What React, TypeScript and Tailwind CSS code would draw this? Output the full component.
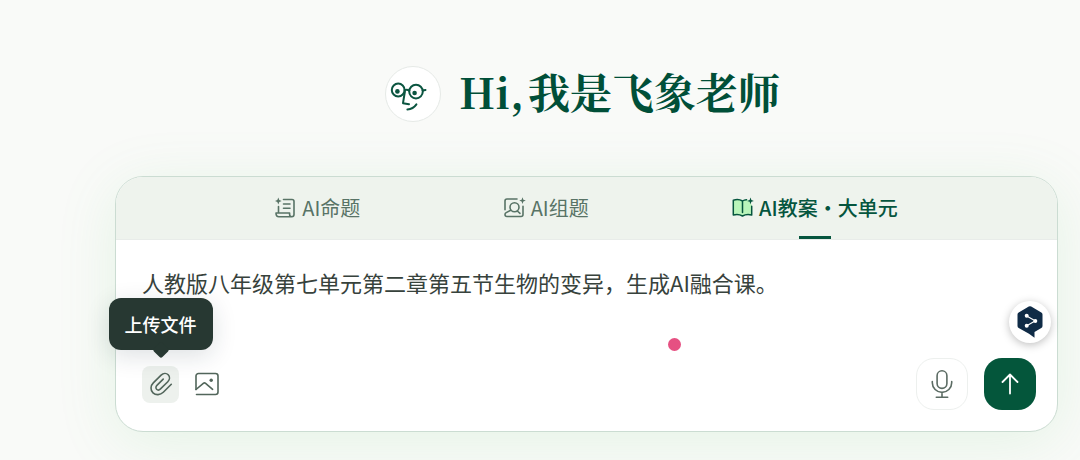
import { useState } from 'react'
import type { ReactNode } from 'react'
import clsx from 'clsx'

type TabId = 'question' | 'paper' | 'lesson'

interface Tab {
  id: TabId
  label: string
  icon: ReactNode
}

// ── 图标 ──────────────────────────────────────────────────────────
function FaceLogo() {
  return (
    <svg viewBox="0 0 56 56" className="size-14 shrink-0" fill="none" stroke="#0b5540" strokeWidth="2" strokeLinecap="round" strokeLinejoin="round" aria-hidden="true">
      <circle cx="13.2" cy="24" r="6.4" />
      <circle cx="31" cy="25.6" r="6.8" />
      <path d="M19.6 24.2c1.6-.9 3-.8 4.7.4M37.7 24.6l2.800-.6" />
      <path d="M19.9 25.5 18 37.2l6 1" />
      <path d="M22.4 43.4c3.8-.2 6.9-2 9-5" />
      <circle cx="12.4" cy="25.4" r="2.3" fill="#0b5540" stroke="none" />
      <circle cx="29.6" cy="27" r="2.3" fill="#0b5540" stroke="none" />
    </svg>
  )
}

function QuestionIcon() {
  return (
    <svg viewBox="0 0 22 22" className="size-[22px]" fill="none" stroke="currentColor" strokeWidth="1.6" strokeLinecap="round" strokeLinejoin="round" aria-hidden="true">
      <path d="M8.5 2.5H17a2 2 0 0 1 2 2V17.5a2.200 2.200 0 0 1-4.400 0V16H1c0 2.300 1 3.700 2.900 3.700H17M3.500 9.500V16" />
      <path d="M8.5 7H15M8.5 11.2H15" />
      <path d="M3.3.6 4.3 3l2.400 1-2.400 1-1 2.400-1-2.400L0 4l2.300-1z" fill="currentColor" stroke="none" />
    </svg>
  )
}

function PaperIcon() {
  return (
    <svg viewBox="0 0 22 22" className="size-[22px]" fill="none" stroke="currentColor" strokeWidth="1.6" strokeLinecap="round" strokeLinejoin="round" aria-hidden="true">
      <path d="M13 2H3a2 2 0 0 0-2 2v8.7M19 9.2v8.3a2 2 0 0 1-2 2H3a2 2 0 0 1-2-2c0-1 .3-1.400 1.200-1.900l4.500-2.400" />
      <circle cx="10.5" cy="10.2" r="4.5" />
      <path d="M13.3 14 16 16.3" />
      <path d="m18.5.3.9 2.400 2.400.9-2.400.9-.9 2.400-.9-2.400-2.400-.9 2.400-.9z" fill="currentColor" stroke="none" />
    </svg>
  )
}

function LessonIcon() {
  return (
    <svg viewBox="0 0 22 22" className="size-[22px]" fill="none" stroke="currentColor" strokeWidth="1.5" strokeLinecap="round" strokeLinejoin="round" aria-hidden="true">
      <path d="M1.3 3.2c3.5-1 6.5-.8 9.2.8 1.500-1 3.100-1.400 5-1.400l4.200 5.200v10c-3.700-.8-6.500-.4-9.200 1.200-2.700-1.600-5.500-2-9.200-1z" fill="#b9f5ba" stroke="none" />
      <path d="M14.5 2.7c-1.500.1-2.800.5-4 1.300-2.700-1.600-5.700-1.800-9.200-.8V18c3.700-1 6.500-.6 9.200 1 2.700-1.600 5.500-2 9.200-1V9.300M10.500 4v11.500" />
      <path d="m18.5.5.9 2.500 2.500.9-2.500.9-.9 2.500-.9-2.500-2.500-.9 2.500-.9z" fill="currentColor" stroke="none" />
    </svg>
  )
}

function ClipIcon() {
  return (
    <svg viewBox="0 0 24 24" className="size-6" fill="none" stroke="currentColor" strokeWidth="1.6" strokeLinecap="round" strokeLinejoin="round" aria-hidden="true">
      <path d="m22.3 12.3-8 8c-3 2.900-7.500 3.200-10.300.5-2.800-2.700-2.600-7 .3-9.900l7.800-7.800c2.200-2.100 5.300-2.200 7.100-.4 1.800 1.900 1.700 4.900-.4 7l-7.300 7.200c-1.300 1.300-2.900 1.300-3.900.3-1-1-.9-2.700.3-3.800l6.300-6.300" />
    </svg>
  )
}

function ImageIcon() {
  return (
    <svg viewBox="0 0 24 24" className="size-6" fill="none" stroke="currentColor" strokeWidth="1.6" strokeLinecap="round" strokeLinejoin="round" aria-hidden="true">
      <path d="M1 17.5V4a2.500 2.500 0 0 1 2.500-2.500h17A2.500 2.500 0 0 1 23 4v16a2.500 2.500 0 0 1-2.500 2.500H1.500" />
      <path d="m1 17.5 7.300-6.200c.8-.7 1.500-.7 2.300 0l7 6" />
      <circle cx="16.2" cy="8.3" r="1.7" fill="currentColor" stroke="none" />
    </svg>
  )
}

function MicIcon() {
  return (
    <svg viewBox="0 0 28 28" className="size-7" fill="none" stroke="currentColor" strokeWidth="1.6" strokeLinecap="round" aria-hidden="true">
      <rect x="9.1" y=".8" width="9.8" height="17.6" rx="4.9" />
      <path d="M4.3 11.5v1.200a9.700 9.700 0 0 0 19.400 0v-1.200M14 22.500v4.700M8.300 27.200h11.400" />
    </svg>
  )
}

function ArrowUpIcon() {
  return (
    <svg viewBox="0 0 24 24" className="size-6" fill="none" stroke="currentColor" strokeWidth="1.8" strokeLinecap="round" strokeLinejoin="round" aria-hidden="true">
      <path d="M12 21.5V2.5M4.5 10 12 2.500l7.500 7.500" />
    </svg>
  )
}

function TranslateIcon() {
  return (
    <svg viewBox="0 0 26 32" className="h-8 w-[26px]" aria-hidden="true">
      <path d="M11.8.5a2.400 2.400 0 0 1 2.400 0L24.300 6.400a2.400 2.400 0 0 1 1.200 2V20a2.400 2.400 0 0 1-1.200 2L17.500 26v5.700L12 27.800 1.700 22a2.400 2.400 0 0 1-1.200-2V8.400a2.400 2.400 0 0 1 1.200-2z" fill="#0f2b46" />
      <path d="m9.7 10 8.800 5M9.700 19.800l8.800-5" stroke="#fff" strokeWidth="1.2" />
      <g fill="#fff">
        <circle cx="9.7" cy="9.8" r="2" />
        <circle cx="18.3" cy="14.9" r="2" />
        <circle cx="9.7" cy="19.8" r="2" />
      </g>
    </svg>
  )
}

const TABS: Tab[] = [
  { id: 'question', label: 'AI命题', icon: <QuestionIcon /> },
  { id: 'paper', label: 'AI组题', icon: <PaperIcon /> },
  { id: 'lesson', label: 'AI教案・大单元', icon: <LessonIcon /> },
]

// ── 标题 ──────────────────────────────────────────────────────────
function Greeting() {
  return (
    <header className="flex items-center justify-center gap-[18px] pr-2">
      <span className="flex size-14 items-center justify-center rounded-full border border-[#e6eae7] bg-white">
        <FaceLogo />
      </span>
      <h1 className="flex gap-1 pb-1.5 font-['Noto_Serif_CJK_SC','Liberation_Serif',serif] text-[42px] leading-[50px] font-bold whitespace-nowrap text-[#004f38]">
        <span>Hi,</span>
        <span>我是飞象老师</span>
      </h1>
    </header>
  )
}

// ── 输入卡片 ──────────────────────────────────────────────────────
function Composer() {
  const [active, setActive] = useState<TabId>('lesson')
  const [prompt, setPrompt] = useState('人教版八年级第七单元第二章第五节生物的变异，生成AI融合课。')

  return (
    <section className="relative rounded-[28px] border border-[#cbdcd2] bg-white shadow-[0_10px_60px_rgba(90,200,110,0.13)]">
      <div role="tablist" className="flex h-[63px] justify-evenly rounded-t-[27px] border-b border-[#e8ece9] bg-[#eef3ed] px-4">
        {TABS.map((tab) => (
          <button
            key={tab.id}
            type="button"
            role="tab"
            aria-selected={active === tab.id}
            onClick={() => setActive(tab.id)}
            className={clsx(
              'relative flex items-center gap-[5px] text-xl whitespace-nowrap',
              active === tab.id ? 'font-medium text-[#05553e]' : 'text-[#587366]',
            )}
          >
            {tab.icon}
            {tab.label}
            {active === tab.id && <span className="absolute bottom-0 left-1/2 h-[3px] w-8 -translate-x-1/2 bg-[#05553e]" />}
          </button>
        ))}
      </div>

      <div className="px-[26px] pt-[26px] pb-[21px]">
        <textarea
          aria-label="输入内容"
          value={prompt}
          onChange={(e) => setPrompt(e.target.value)}
          className="block h-[92px] w-full resize-none text-[22px] leading-8 text-[#37423c] outline-none"
        />
        <div className="flex items-center gap-4">
          <div className="relative">
            <button type="button" aria-label="上传文件" className="flex size-[37px] items-center justify-center rounded-lg bg-[#edf1ed] text-[#52665b]">
              <ClipIcon />
            </button>
            <div role="tooltip" className="absolute bottom-full left-1/2 mb-4 -translate-x-1/2 rounded-xl bg-[#273832] px-4 py-3 text-lg leading-7 font-medium whitespace-nowrap text-white shadow-[0_6px_24px_rgba(20,40,60,0.14)]">
              上传文件
              <span className="absolute top-full left-1/2 size-3 -translate-x-1/2 -translate-y-1/2 rotate-45 rounded-xs bg-[#273832]" />
            </div>
          </div>
          <button type="button" aria-label="上传图片" className="flex items-center justify-center text-[#52665b]">
            <ImageIcon />
          </button>
          <button type="button" aria-label="语音输入" className="ml-auto flex size-13 items-center justify-center rounded-[18px] border border-[#edf0ee] bg-white text-[#5b6b63]">
            <MicIcon />
          </button>
          <button type="button" aria-label="发送" className="-mr-[5px] flex size-13 items-center justify-center rounded-[18px] bg-[#04563b] text-white">
            <ArrowUpIcon />
          </button>
        </div>
      </div>

      {/* 悬浮的翻译插件按钮和光标点 */}
      <button type="button" aria-label="翻译" className="absolute right-1.5 bottom-[88px] flex size-[42px] items-center justify-center rounded-full bg-white shadow-[0_2px_8px_rgba(0,0,0,0.25)]">
        <TranslateIcon />
      </button>
      <span className="absolute right-[376px] bottom-20 size-[13px] rounded-full bg-[#e65082]" />
    </section>
  )
}

export default function App() {
  return (
    <main lang="zh-CN" className="flex min-h-screen flex-col gap-[54px] bg-[#f9faf8] pt-[66px] pr-[22px] pb-7 pl-[115px] font-['Noto_Sans_CJK_SC',sans-serif]">
      <Greeting />
      <Composer />
    </main>
  )
}
